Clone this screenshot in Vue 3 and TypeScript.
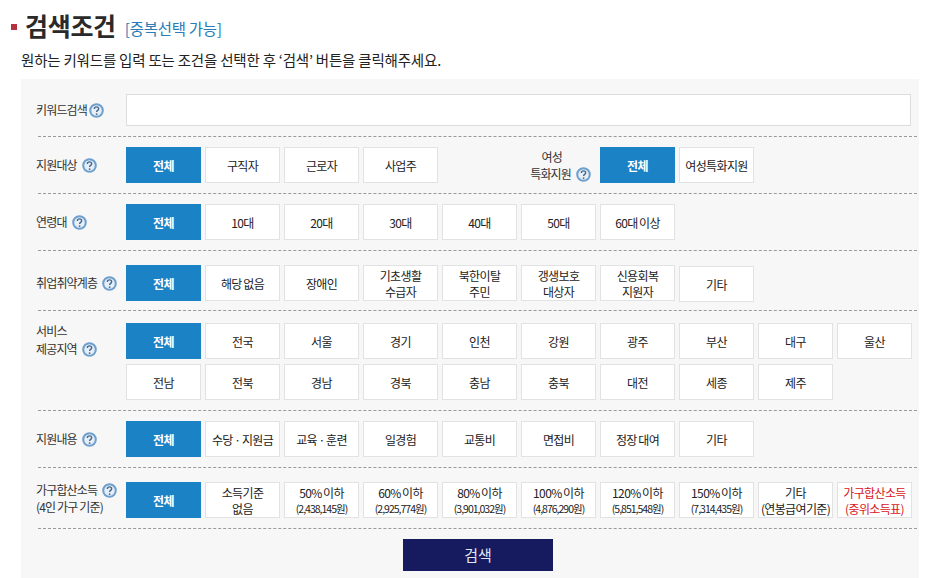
<script setup lang="ts">
interface Btn { t: string; s?: string; red?: boolean }
interface Row { label: string[]; helpAt: number; btns: Btn[]; cls: string }
const b = (...a: string[]): Btn[] => a.map((t) => ({ t }))
const rows: Row[] = [
  { label: ['연령대'], helpAt: 0, cls: 'r-age', btns: b('전체', '10대', '20대', '30대', '40대', '50대', '60대 이상') },
  { label: ['취업취약계층'], helpAt: 0, cls: 'r-weak', btns: b('전체', '해당 없음', '장애인', '기초생활\n수급자', '북한이탈\n주민', '갱생보호\n대상자', '신용회복\n지원자', '기타') },
  { label: ['서비스', '제공지역'], helpAt: 1, cls: 'r-region', btns: b('전체', '전국', '서울', '경기', '인천', '강원', '광주', '부산', '대구', '울산', '전남', '전북', '경남', '경북', '충남', '충북', '대전', '세종', '제주') },
  { label: ['지원내용'], helpAt: 0, cls: 'r-content', btns: b('전체', '수당 · 지원금', '교육 · 훈련', '일경험', '교통비', '면접비', '정장 대여', '기타') },
  {
    label: ['가구합산소득', '(4인 가구 기준)'], helpAt: 0, cls: 'r-income',
    btns: [
      { t: '전체' }, { t: '소득기준\n없음' },
      { t: '50% 이하', s: '(2,438,145원)' }, { t: '60% 이하', s: '(2,925,774원)' },
      { t: '80% 이하', s: '(3,901,032원)' }, { t: '100% 이하', s: '(4,876,290원)' },
      { t: '120% 이하', s: '(5,851,548원)' }, { t: '150% 이하', s: '(7,314,435원)' },
      { t: '기타\n(연봉급여기준)' }, { t: '가구합산소득\n(중위소득표)', red: true },
    ],
  },
]
const target = b('전체', '구직자', '근로자', '사업주')
const women = b('전체', '여성특화지원')
</script>

<template>
  <main class="page">
    <h1 class="title"><i class="mark"></i><span class="big">검색조건</span><span class="sub">[중복선택 가능]</span></h1>
    <p class="desc">원하는 키워드를 입력 또는 조건을 선택한 후 ‘검색’ 버튼을 클릭해주세요.</p>
    <section class="panel">
      <div class="row r-key">
        <div class="label"><span class="ln">키워드검색<svg class="q tight" viewBox="0 0 16 16"><circle cx="8" cy="8" r="6.7" fill="#e6eff7" stroke="#6f9fcc" stroke-width="2.200"/><path d="M5.700 6.300c0-1.400 1-2.200 2.300-2.200s2.300.8 2.300 2c0 1.800-2.200 1.700-2.200 3.500" fill="none" stroke="#46688a" stroke-width="1.500"/><circle cx="8.100" cy="11.800" r="1" fill="#46688a"/></svg></span></div>
        <input class="kw" type="text" />
      </div>
      <div class="row r-target">
        <div class="label"><span class="ln">지원대상<svg class="q" viewBox="0 0 16 16"><circle cx="8" cy="8" r="6.7" fill="#e6eff7" stroke="#6f9fcc" stroke-width="2.200"/><path d="M5.700 6.300c0-1.400 1-2.200 2.300-2.200s2.300.8 2.300 2c0 1.800-2.200 1.700-2.200 3.500" fill="none" stroke="#46688a" stroke-width="1.500"/><circle cx="8.100" cy="11.800" r="1" fill="#46688a"/></svg></span></div>
        <div class="btns fixed">
          <button v-for="(x, i) in target" :key="x.t" class="btn" :class="{ on: i === 0 }">{{ x.t }}</button>
        </div>
        <div class="wlabel"><span>여성</span><span>특화지원<svg class="q" viewBox="0 0 16 16"><circle cx="8" cy="8" r="6.7" fill="#e6eff7" stroke="#6f9fcc" stroke-width="2.200"/><path d="M5.700 6.300c0-1.400 1-2.200 2.300-2.200s2.300.8 2.300 2c0 1.800-2.200 1.700-2.200 3.500" fill="none" stroke="#46688a" stroke-width="1.500"/><circle cx="8.100" cy="11.800" r="1" fill="#46688a"/></svg></span></div>
        <div class="btns womens">
          <button v-for="(x, i) in women" :key="x.t" class="btn" :class="{ on: i === 0 }">{{ x.t }}</button>
        </div>
      </div>
      <div v-for="r in rows" :key="r.cls" class="row" :class="r.cls">
        <div class="label">
          <span v-for="(l, i) in r.label" :key="l" class="ln">{{ l }}<svg v-if="i === r.helpAt" class="q" viewBox="0 0 16 16"><circle cx="8" cy="8" r="6.7" fill="#e6eff7" stroke="#6f9fcc" stroke-width="2.200"/><path d="M5.700 6.300c0-1.400 1-2.200 2.300-2.200s2.300.8 2.300 2c0 1.800-2.200 1.700-2.200 3.500" fill="none" stroke="#46688a" stroke-width="1.500"/><circle cx="8.100" cy="11.800" r="1" fill="#46688a"/></svg></span>
        </div>
        <div class="btns">
          <button v-for="(x, i) in r.btns" :key="x.t" class="btn" :class="{ on: i === 0, red: x.red }">
            {{ x.t }}<small v-if="x.s">{{ x.s }}</small>
          </button>
        </div>
      </div>
      <div class="act"><button class="go">검색</button></div>
    </section>
  </main>
</template>

<style scoped>
.page {
  width: 928px;
  height: 578px;
  overflow: hidden;
  box-sizing: border-box;
  padding: 0 9px 0 21px;
  font-family: "Noto Sans CJK KR", "Noto Sans", sans-serif;
  color: #222;
  background: #fff;
}
.title {
  display: flex;
  align-items: center;
  height: 49px;
  margin: 0 0 0 -10px;
  font-weight: 400;
}
.mark { width: 6px; height: 6px; background: #b5333f; margin: 5px 8px 0 0; }
.big { font-size: 25px; font-weight: 700; letter-spacing: -0.3px; color: #2a2a2a; }
.sub { font-size: 15.5px; color: #2a7db8; margin: 6px 0 0 9px; letter-spacing: -0.3px; }
.desc { margin: 0; height: 30px; line-height: 22px; font-size: 14.5px; letter-spacing: -0.2px; color: #222; }
.panel { background: #f7f7f7; height: 499px; padding: 0 2px 0 17px; box-sizing: border-box; }
.row {
  display: flex;
  align-items: flex-start;
  border-bottom: 1px dashed #9a9a9a;
  box-sizing: border-box;
}
.r-key { height: 58px; padding-top: 15px; }
.r-target { height: 57px; padding-top: 10px; }
.r-age { height: 57px; padding-top: 10px; }
.r-weak { height: 60px; padding-top: 14px; }
.r-region { height: 100px; padding-top: 12px; }
.r-content { height: 57px; padding-top: 10px; }
.r-income { height: 61px; padding-top: 14px; }
.label {
  width: 90px;
  min-height: 36px;
  margin-left: -2px;
  flex: none;
  font-size: 12px;
  letter-spacing: -0.85px;
  color: #333;
  display: flex;
  flex-direction: column;
  justify-content: center;
  line-height: 18px;
  white-space: nowrap;
}
.r-key .label { min-height: 31px; }
.r-income .label { line-height: 17px; margin-top: -2px; }
.r-region .label { margin-top: -1px; }
.ln { display: block; height: 1lh; }
.q { width: 15px; height: 15px; vertical-align: -3px; margin-left: 5px; }
.q.tight { margin-left: 2px; }
.kw {
  width: 785px;
  height: 32px;
  box-sizing: border-box;
  border: 1px solid #ddd;
  background: #fff;
  outline: none;
}
.btns { display: flex; flex-wrap: wrap; gap: 5px 4px; width: 790px; }
.btns.fixed { width: 312px; }
.btns.womens { width: 160px; }
.wlabel {
  width: 162px;
  flex: none;
  box-sizing: border-box;
  padding-right: 9px;
  font-size: 12px;
  letter-spacing: -0.85px;
  color: #333;
  display: flex;
  flex-direction: column;
  align-items: flex-end;
  line-height: 17px;
  height: 36px;
  justify-content: center;
}
.wlabel span { display: block; height: 17px; }
.wlabel span:first-child { padding-right: 29px; }
.btn {
  width: 75px;
  height: 36px;
  box-sizing: border-box;
  padding: 1px 0 0;
  border: 1px solid #e2e2e2;
  background: #fff;
  font: inherit;
  font-size: 12px;
  line-height: 16px;
  letter-spacing: -0.65px;
  word-spacing: -0.5px;
  color: #222;
  white-space: pre-line;
  text-align: center;
  cursor: pointer;
}
.btn small { display: block; font-size: 10.5px; letter-spacing: -1px; line-height: 16px; white-space: nowrap; word-spacing: 0; }
.btn.on { background: #1c82c6; border-color: #1c82c6; color: #fff; font-weight: 700; }
.btn.red { color: #d9141c; }
.r-weak .btn:last-child { margin-top: 1px; }
.act { display: flex; justify-content: center; padding-top: 10px; margin-left: 1px; }
.go {
  width: 150px;
  height: 32px;
  padding: 0 0 1px;
  border: 0;
  background: #161a5e;
  color: #e4e4ee;
  font: inherit;
  font-size: 15px;
  cursor: pointer;
}
</style>
